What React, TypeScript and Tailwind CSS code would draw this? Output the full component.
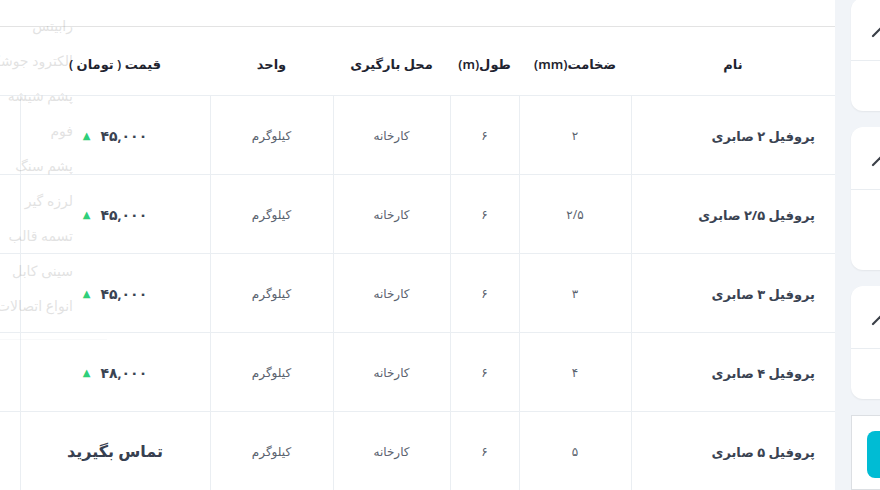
import React from "react";

type Row = {
  name: string;
  thick: string;
  price: string | null;
};

const rows: Row[] = [
  { name: "پروفیل ۲ صابری", thick: "۲", price: "۴۵,۰۰۰" },
  { name: "پروفیل ۲/۵ صابری", thick: "۲/۵", price: "۴۵,۰۰۰" },
  { name: "پروفیل ۳ صابری", thick: "۳", price: "۴۵,۰۰۰" },
  { name: "پروفیل ۴ صابری", thick: "۴", price: "۴۸,۰۰۰" },
  { name: "پروفیل ۵ صابری", thick: "۵", price: null },
];

const menuItems = [
  "میلگرد",
  "رابیتس",
  "الکترود جوشکاری",
  "پشم شیشه",
  "فوم",
  "پشم سنگ",
  "لرزه گیر",
  "تسمه قالب",
  "سینی کابل",
  "انواع اتصالات",
];

function Pencil() {
  return (
    <svg width="14" height="14" viewBox="0 0 14 14" className="block">
      <path d="M2 12 L10 4" stroke="#3a3f47" strokeWidth="2.2" strokeLinecap="round" />
    </svg>
  );
}

function SideCard({ tall }: { tall?: boolean }) {
  return (
    <div className="w-[60px] bg-white rounded-xl shadow-[0_1px_2px_rgba(0,0,0,0.06)] flex flex-col">
      <div className="h-[63px] border-b border-[#e9edf1] flex items-center pl-[20px] pt-[4px]">
        <Pencil />
      </div>
      <div className={tall ? "h-[80px]" : "h-[50px]"} />
    </div>
  );
}

export default function App() {
  return (
    <div
      className="w-[880px] h-[490px] overflow-hidden flex bg-[#f1f4f8] font-['Noto_Sans','DejaVu_Sans',sans-serif]"
      dir="ltr"
    >
      {/* main table panel */}
      <main className="relative w-[835px] h-full bg-white overflow-hidden">
        <div className="h-[27px] border-b border-[#e3e3e3]" />
        <div dir="rtl" className="w-[835px] overflow-hidden">
          <table className="border-collapse table-fixed w-[935px]">
            <colgroup>
              <col className="w-[204px]" />
              <col className="w-[112px]" />
              <col className="w-[69px]" />
              <col className="w-[117px]" />
              <col className="w-[123px]" />
              <col className="w-[190px]" />
              <col className="w-[120px]" />
            </colgroup>
            <thead>
              <tr className="h-[68px] text-[13px] text-[#1f2430]">
                <th className="font-semibold pt-[7px]">نام</th>
                <th className="font-semibold pt-[7px]">ضخامت(mm)</th>
                <th className="font-semibold pt-[7px]">طول(m)</th>
                <th className="font-semibold pt-[7px]">محل بارگیری</th>
                <th className="font-semibold pt-[7px]">واحد</th>
                <th className="font-semibold pt-[7px]">قیمت ( تومان )</th>
                <th />
              </tr>
            </thead>
            <tbody>
              {rows.map((r) => (
                <tr key={r.name} className="h-[79px] border-t border-[#eaeef2]">
                  <td className="border-l border-[#eaeef2] pr-[20px] pt-[4px] text-right text-[13px] font-bold text-[#3a4352]">
                    {r.name}
                  </td>
                  <td className="border-l border-[#eaeef2] pt-[3px] text-center text-[12px] text-[#5a626e]">{r.thick}</td>
                  <td className="border-l border-[#eaeef2] pt-[3px] text-center text-[12px] text-[#5a626e]">۶</td>
                  <td className="border-l border-[#eaeef2] pt-[3px] text-center text-[12px] text-[#5a626e]">کارخانه</td>
                  <td className="border-l border-[#eaeef2] pt-[3px] text-center text-[12px] text-[#5a626e]">کیلوگرم</td>
                  <td className="border-l border-[#eaeef2] text-center">
                    {r.price ? (
                      <span className="inline-flex items-center gap-[10px] text-[14px] font-bold text-[#3a4352]">
                        {r.price}
                        <span className="text-[10px] text-[#2fcf7a]">▲</span>
                      </span>
                    ) : (
                      <span className="text-[16px] font-bold text-[#374050]">تماس بگیرید</span>
                    )}
                  </td>
                  <td />
                </tr>
              ))}
            </tbody>
          </table>
        </div>

        {/* fading dropdown menu over the table */}
        <div
          dir="rtl"
          className="absolute top-[-43px] right-[728px] w-[200px] h-[383px] border-b border-[#d7dbe0] opacity-15 pr-[34px] pt-[16px] flex flex-col"
        >
          {menuItems.map((m) => (
            <div key={m} className="h-[35px] leading-[35px] text-[14px] text-[#444] whitespace-nowrap text-right">
              {m}
            </div>
          ))}
        </div>
      </main>

      {/* right side cards */}
      <aside className="flex-1 pl-[16px] flex flex-col gap-[16px] -mt-[2px] overflow-hidden">
        <SideCard />
        <SideCard tall />
        <SideCard />
        <div className="w-[60px] h-[90px] bg-white border border-[#dcdfe3] pt-[15px] pl-[15px]">
          <div className="w-[40px] h-[47px] rounded-lg bg-[#00bcd4]" />
        </div>
      </aside>
    </div>
  );
}
